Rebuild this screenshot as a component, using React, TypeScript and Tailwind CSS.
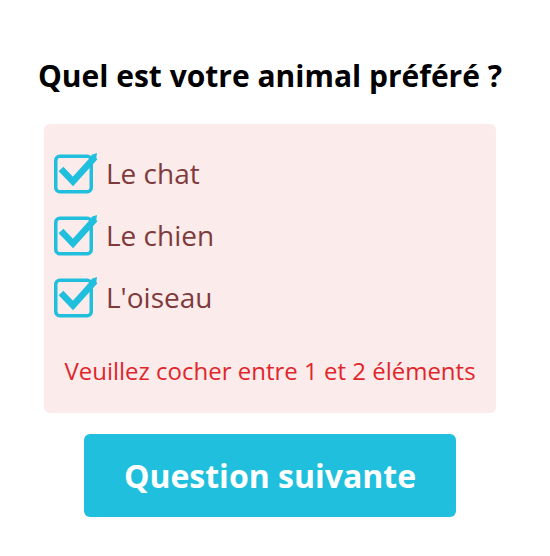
const options = ["Le chat", "Le chien", "L'oiseau"];

const CheckedBox = () => (
	<svg width="44" height="42" viewBox="0 0 44 42" className="shrink-0">
		<rect
			x="1.75"
			y="4.25"
			width="35.5"
			height="35.5"
			rx="4"
			fill="none"
			stroke="#20bfde"
			strokeWidth="3.5"
		/>
		<polyline
			points="7,17 19,29.5 41,5"
			fill="none"
			stroke="#20bfde"
			strokeWidth="6.5"
			strokeLinejoin="miter"
		/>
		<polygon points="37,3 43,1 42,8" fill="#20bfde" />
	</svg>
);

export default function App() {
	return (
		<div
			className="w-[540px] flex flex-col items-center bg-white"
			style={{ fontFamily: '"Open Sans", "Noto Sans", sans-serif' }}
		>
			<h1 className="mt-[56px] text-[30px] leading-[40px] font-bold text-black">
				Quel est votre animal préféré ?
			</h1>

			<div className="mt-[28px] w-[452px] rounded-md bg-[#fcebeb] px-[10px] pt-[18px] pb-[27px]">
				{options.map((label) => (
					<label key={label} className="flex h-[62px] items-center gap-2 cursor-pointer">
						<CheckedBox />
						<span className="text-[28px] leading-[38px] text-[#7f3b3b]">{label}</span>
					</label>
				))}
				<p className="mt-[28px] text-center text-[24px] leading-[30px] text-[#e0262b]">
					Veuillez cocher entre 1 et 2 éléments
				</p>
			</div>

			<button
				type="button"
				className="mt-[21px] mb-[39px] h-[83px] w-[372px] rounded-md bg-[#20bfde] text-[32px] font-bold text-white"
			>
				Question suivante
			</button>
		</div>
	);
}
